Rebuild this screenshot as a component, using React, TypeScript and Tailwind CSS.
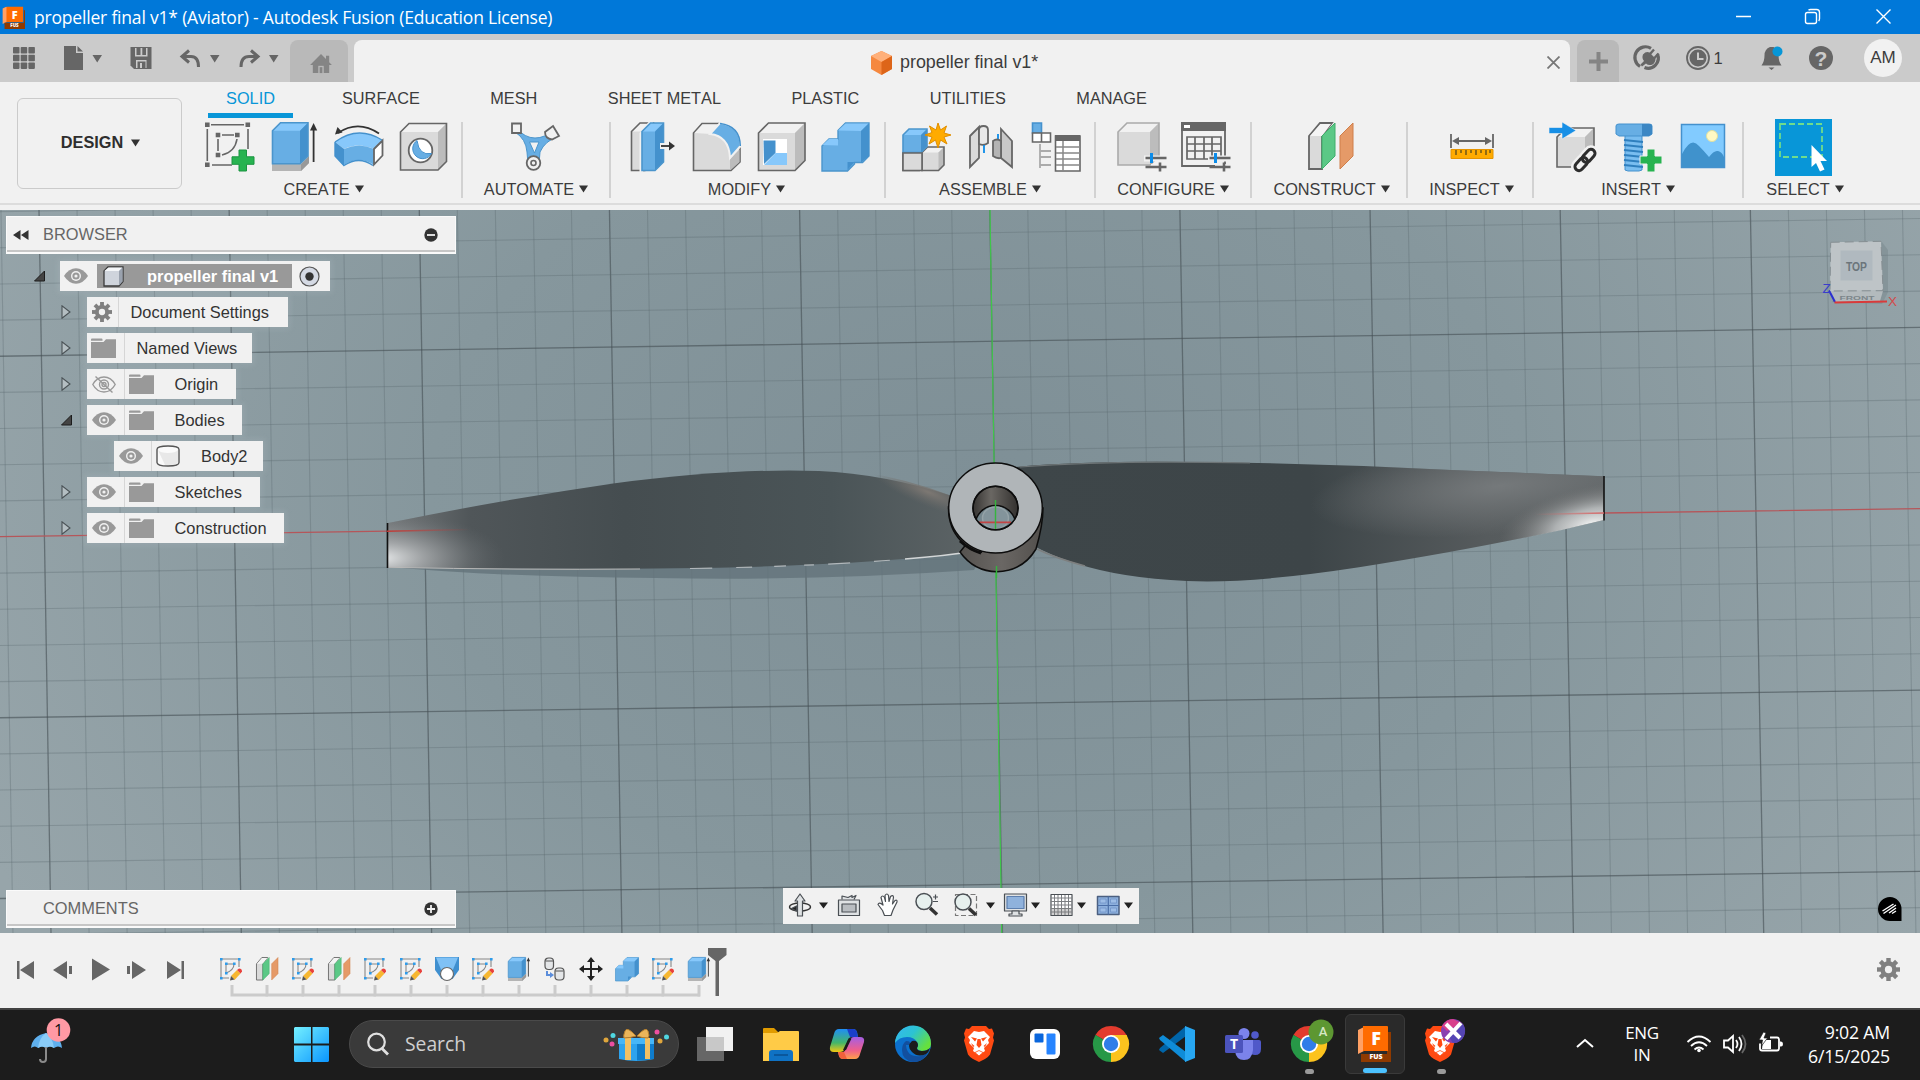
import React from "react";

type Children = { children?: React.ReactNode };

/* ---------- small shared pieces ---------- */

const Caret = ({ color = "#333" }: { color?: string }) => (
  <svg width="9" height="8" viewBox="0 0 9 8" className="shrink-0">
    <path d="M0 .5h9L4.5 7.5z" fill={color} />
  </svg>
);

const Icon = ({ children }: Children) => (
  <svg width="50" height="50" viewBox="0 0 50 50" className="shrink-0 overflow-visible">
    {children}
  </svg>
);

type BoxProps = { x: number; y: number; w: number; h: number; d: number; blue?: boolean; stroke?: string };

const Prism = ({ x, y, w, h, d, blue, stroke }: BoxProps) => {
  const c = blue ? ["#67aee4", "#87c8fb", "#4491cd", "#4b95cc"] : ["#dadada", "#f1f1f1", "#bcbcbc", "#666"];
  const s = stroke ?? c[3];
  return (
    <g>
      <path d={`M${x} ${y + d}l${d} ${-d}h${w - d}v${h - d}l${-d} ${d}h${d - w}z`} fill={c[0]} />
      <path d={`M${x} ${y + d}l${d} ${-d}h${w - d}l${-d} ${d}z`} fill={c[1]} />
      <path d={`M${x + w} ${y}v${h - d}l${-d} ${d}v${d - h}z`} fill={c[2]} />
      <path d={`M${x} ${y + d}l${d} ${-d}h${w - d}v${h - d}l${-d} ${d}h${d - w}z`} fill="none" stroke={s} strokeWidth="1.6" />
    </g>
  );
};

/* ---------- ribbon icons ---------- */

const SketchIcon = () => (
  <Icon>
    <path d="M6 2.7h33M2.3 7v32M43 7v20M7 43h20M17 13h12M13 17v12M32 17Q30 30 17 33" fill="none" stroke="#666" strokeWidth="1.6" />
    <path d="M0 .5h4.6v4.6H0zM40.5.5h4.6v4.6h-4.6zM0 40.5h4.6v4.6H0zM10.7 10.7h4.6v4.6h-4.6zM30 10.7h4.6v4.6H30zM10.7 30.7h4.6v4.6h-4.6z" fill="#666" />
    <path d="M34 28h7.5v6.8H49v7.5h-7.5V49H34v-6.7h-7v-7.5h7z" fill="#27b350" stroke="#1b9440" />
  </Icon>
);

const ExtrudeArt = () => (
  <g>
    <path d="M2 42h29l8-8v7l-8 8H2z" fill="#b4b4b4" />
    <path d="M31 42l8-8v7l-8 8z" fill="#999" />
    <Prism x={2.5} y={0.8} w={35.5} h={41} d={8} blue />
    <path d="M43.6 40V6" stroke="#333" strokeWidth="1.8" />
    <path d="M40 8.5h7.2L43.6 1z" fill="#333" />
  </g>
);

const RevolveIcon = () => (
  <Icon>
    <path d="M4 11Q24-2.500 45 11.500" fill="none" stroke="#333" strokeWidth="1.800" />
    <path d="M1 12.500L3.500 5l5 5.500z" fill="#333" />
    <path d="M1 20Q24 3 49 19L40 27Q24 20 10 27z" fill="#87c8fb" />
    <path d="M1 20l9 7v17L1 34z" fill="#4491cd" />
    <path d="M10 27q15-7 30 0v16q-15-10-30 0z" fill="#67aee4" />
    <path d="M40 27l8.500-8.500v15L40 42.500z" fill="#fff" stroke="#666" strokeWidth="1.800" />
    <path d="M1 20Q24 3 48 18M1 20v14l9 9.500q15-10 29 0" fill="none" stroke="#4491cd" strokeWidth="1.400" />
  </Icon>
);

const HoleIcon = () => (
  <Icon>
    <Prism x={1.500} y={1.500} w={46} h={46.500} d={8.500} />
    <circle cx="21.500" cy="28.500" r="11.800" fill="#fff" stroke="#666" strokeWidth="1.800" />
    <path d="M18 18.500a10 10 0 1 0 14.500 13Q20 34 18 18.500z" fill="#67aee4" stroke="#4491cd" />
  </Icon>
);

const AutomateIcon = () => (
  <Icon>
    <path d="M5 6Q14 16 24 16Q34 16 42 8l4 7Q34 19 29 30L28 42H17l-1-12Q15 17 4 10z" fill="#67aee4" stroke="#4b95cc" />
    <path d="M18.500 20h9.500l-4.500 11z" fill="#f1f1f1" stroke="#4b95cc" />
    <path d="M1 1.500h9v9.500H1z" fill="#f1f1f1" stroke="#666" strokeWidth="1.800" />
    <path d="M42 4l6 10-7 3.500q-7-1-7-7.500z" fill="#f1f1f1" stroke="#666" strokeWidth="1.800" />
    <circle cx="22.500" cy="41" r="6.800" fill="#f1f1f1" stroke="#666" strokeWidth="1.800" />
    <circle cx="22.500" cy="41" r="2.500" fill="none" stroke="#666" strokeWidth="1.600" />
  </Icon>
);

const PressPullIcon = () => (
  <Icon>
    <Prism x={3.500} y={1} w={22} h={47.500} d={8.500} />
    <path d="M11.500 11L20.500 0h5L15 11v39h-3.500z" fill="#f1f1f1" />
    <Prism x={14} y={1} w={21.500} h={47.500} d={8.500} blue />
    <path d="M32 24h14" stroke="#f1f1f1" strokeWidth="6" />
    <path d="M33 24h10" stroke="#333" strokeWidth="1.800" />
    <path d="M41 19.500v9l6-4.500z" fill="#333" />
  </Icon>
);

const FilletIcon = () => (
  <Icon>
    <path d="M1.500 11L10 1.500h19Q48 6 48 26v14l-9 8.500H1.500z" fill="#dadada" stroke="#666" strokeWidth="1.600" />
    <path d="M2.500 11L10.500 2.500H28l-9 9.500z" fill="#f1f1f1" />
    <path d="M38 37l9.500-9.500V40l-9 8h-.5z" fill="#bcbcbc" />
    <path d="M18 12l10-11Q49 4 48.500 24L38 36Q37 14 18 12z" fill="#67aee4" stroke="#f1f1f1" strokeWidth="2" />
    <path d="M28 1.500Q48 4 48.300 24" fill="none" stroke="#4491cd" strokeWidth="1.500" />
  </Icon>
);

const ShellIcon = () => (
  <Icon>
    <Prism x={1.500} y={1} w={46.500} h={47.500} d={10} />
    <path d="M6 17h24v26H6z" fill="#fff" />
    <path d="M6.500 18.500h12V31L7 42z" fill="#4491cd" />
    <path d="M18.500 31H30v12H7z" fill="#87c8fb" />
  </Icon>
);

const CombineArt = () => (
  <g>
    <path d="M17 8.500L24.500 1H48v33l-6.500 6.500h-8V42l-7 7H1V24l7-7h9z" fill="#67aee4" stroke="#4b95cc" strokeWidth="1.400" />
    <path d="M17 8.500L24.500 1.500H48l-8 7.500zM1.500 23L8 17h9v6.500z" fill="#87c8fb" />
    <path d="M40 9l8-8v33l-8 6.500zM26.500 48V40h7z" fill="#4491cd" />
  </g>
);

const NewComponentIcon = () => (
  <Icon>
    <Prism x={1} y={25} w={22} h={23.500} d={5.500} />
    <Prism x={20} y={25} w={22} h={23.500} d={5.500} />
    <Prism x={1} y={7} w={24} h={23.500} d={6} blue />
    <path d="M1 31h19v17.500H1z" fill="#dadada" stroke="#666" strokeWidth="1.600" />
    <path d="M36 1l2.500 7 6-4-2.500 7 7 2-7 2 3 7-6.500-4L36 26l-2.500-8-6.500 4 3-7-7-2 7-2.500-2.500-6.500 6.500 4z" fill="#ffab00" stroke="#e08e00" />
  </Icon>
);

const JointIcon = () => (
  <Icon>
    <path d="M3 14L12 5v31L3 45z" fill="#dadada" stroke="#666" strokeWidth="1.800" />
    <path d="M12 8q0-4 4.500-4T21 8v13q-4 3-9 1z" fill="#e8e8e8" stroke="#666" strokeWidth="1.800" />
    <path d="M17 23v8M31 12v11" stroke="#0c8ce9" strokeWidth="1.800" />
    <path d="M34 7l11 12v26L34 36z" fill="#c8c8c8" stroke="#666" strokeWidth="1.800" />
    <path d="M26 19q4-3 8 0v17q-4 1-8-2z" fill="#b4b4b4" stroke="#666" strokeWidth="1.800" />
  </Icon>
);

const BomIcon = () => (
  <Icon>
    <path d="M1.500 1h9v10h-9z" fill="#67aee4" stroke="#4491cd" strokeWidth="1.600" />
    <path d="M1.500 11h9v9h-9zM10.500 11h9v9h-9z" fill="#fff" stroke="#666" strokeWidth="1.600" />
    <path d="M9 22v24M9 29h11M9 35h11M9 43h11" stroke="#aaa" strokeWidth="1.800" />
    <path d="M24.500 14H49v35H24.500z" fill="#fff" stroke="#666" strokeWidth="1.600" />
    <path d="M24 13h25v6H24z" fill="#666" />
    <path d="M25 25h24M25 31h24M25 37h24M25 43h24M32 19v30" stroke="#888" strokeWidth="1.500" />
  </Icon>
);

const Sliders = () => (
  <g>
    <path d="M27 36.500h22M34 45h15" stroke="#f1f1f1" strokeWidth="6" />
    <path d="M28.500 36h21M28.500 45h21M43 40.500v9" stroke="#666" strokeWidth="2.600" />
    <path d="M34.500 31v10" stroke="#0c8ce9" strokeWidth="3" />
  </g>
);

const ConfigureIcon = () => (
  <Icon>
    <Prism x={1} y={1} w={41} h={42} d={9} stroke="#aaa" />
    <Sliders />
  </Icon>
);

const ConfigTableIcon = () => (
  <Icon>
    <path d="M1 1h43v43H1z" fill="#f1f1f1" stroke="#666" strokeWidth="1.800" />
    <path d="M0 0h45v9H0z" fill="#666" />
    <path d="M3 3h6v3H3z" fill="#fff" />
    <path d="M6 15h34v22H6zM6 22h34M6 29h34M14 15v22M23 15v22M31 15v22" fill="none" stroke="#666" strokeWidth="1.700" />
    <Sliders />
  </Icon>
);

const PlaneArt = () => (
  <g>
    <path d="M3 14L14 1h12L16 14v33H3z" fill="#dadada" stroke="#666" strokeWidth="1.800" />
    <path d="M4 14L14.500 2H25L16 14z" fill="#f4f4f4" />
    <path d="M16 14L29 1v33L16 47z" fill="#5bc886" stroke="#3fae6b" />
    <path d="M34 14L47 1v33L34 47z" fill="#e59a68" stroke="#cf7f4b" />
  </g>
);

const InspectIcon = () => (
  <Icon>
    <path d="M4 12v14M46 12v14" stroke="#666" strokeWidth="1.800" />
    <path d="M8 19h34" stroke="#666" strokeWidth="2" />
    <path d="M5 19l7-4v8zM45 19l-7-4v8z" fill="#666" />
    <path d="M4 27.500h42v9H4z" fill="#ffab00" stroke="#e59400" />
    <path d="M9 28v5M14 28v3M19 28v5M24 28v3M29 28v5M34 28v3M39 28v5M43 28v3" stroke="#5a4a1a" strokeWidth="1.300" />
  </Icon>
);

const InsertIcon = () => (
  <Icon>
    <Prism x={8} y={6} w={37} h={39} d={9} />
    <path d="M0 5.500h13V0l14 8.500L13 17v-5.500H0z" fill="#178fe6" stroke="#f1f1f1" strokeWidth=".6" />
    <g fill="none" stroke="#f1f1f1" strokeWidth="8" transform="rotate(-48 36 38)">
      <rect x="23" y="34" width="15" height="8" rx="4" />
      <rect x="34" y="34" width="15" height="8" rx="4" />
    </g>
    <g fill="none" stroke="#2d2d2d" strokeWidth="3" transform="rotate(-48 36 38)">
      <rect x="23" y="34" width="15" height="8" rx="4" />
      <rect x="34" y="34" width="15" height="8" rx="4" />
    </g>
  </Icon>
);

const FastenerIcon = () => (
  <Icon>
    <path d="M12 12h17v36l-3 1H15l-3-1z" fill="#79bdf0" stroke="#4491cd" />
    <path d="M11 18l19 2M11 23l19 2M11 28l19 2M11 33l19 2M11 38l19 2M11 43l19 2" stroke="#2f7fbe" strokeWidth="2" />
    <path d="M3 4q0-2 3-2h30q3 0 3 2v8l-3 2H6l-3-2z" fill="#67aee4" stroke="#4491cd" />
    <path d="M29 2h8q2 0 2 2v8l-3 2h-7z" fill="#3c87c4" />
    <path d="M34 27h8v7h7v8h-7v8h-8v-8h-7v-8h7z" fill="#27b350" stroke="#f1f1f1" />
  </Icon>
);

const PictureIcon = () => (
  <Icon>
    <path d="M3.500 2.500h43v43h-43z" fill="#82cbff" stroke="#4491cd" strokeWidth="1.500" />
    <circle cx="34" cy="14" r="5.500" fill="#fff9c4" stroke="#e0e0a0" />
    <path d="M4 32Q13 14 21 24q5 5 10 11 5-7 9-6 4 1 6 6v10H4z" fill="#4092cc" />
  </Icon>
);

const SelectIcon = () => (
  <div className="-my-1 h-[57px] w-[57px] shrink-0 bg-[#0896d8]">
    <svg width="57" height="57" viewBox="0 0 57 57">
      <path d="M5 5h42v33H5z" fill="none" stroke="#6fdc8c" strokeWidth="1.800" strokeDasharray="6 3" />
      <path d="M36.500 26v22l4.500-4 4 8.500 4.500-2-4-8.500h6.500z" fill="#fff" />
    </svg>
  </div>
);

/* ---------- title and quick access bars ---------- */

const FusionLogo = ({ className }: { className: string }) => (
  <svg viewBox="0 0 36 36" className={className}>
    <path d="M4 27h30V6l2 1v29H6z" fill="#8f3a00" />
    <path d="M3 3l5-2h25v24H8l-5 2z" fill="#ff6b00" />
    <path d="M1 4l6-3v24l-6 3z" fill="#ffa064" />
    <path d="M4 26h30v10H4z" fill="#8f3a00" />
    <text x="20" y="20" textAnchor="middle" fontFamily="Open Sans, sans-serif" fontWeight="800" fontSize="17" fill="#fff">F</text>
    <text x="19.500" y="33.500" textAnchor="middle" fontFamily="Open Sans, sans-serif" fontWeight="800" fontSize="7" fill="#fff">FUS</text>
  </svg>
);

const TitleBar = () => (
  <header className="flex h-[34px] shrink-0 items-center bg-[#0078d9] pl-[2px] text-white">
    <FusionLogo className="h-[25px] w-[23px]" />
    <span className="ml-[9px] whitespace-nowrap font-['Open_Sans',sans-serif] text-[17.500px] tracking-[-0.190px]">
      propeller final v1* (Aviator) - Autodesk Fusion (Education License)
    </span>
    <svg width="186" height="34" viewBox="1734 0 186 34" className="ml-auto" fill="none" stroke="#fff" strokeWidth="1.400">
      <path d="M1736 16.500h15M1876.500 9.500l14 14M1890.500 9.500l-14 14" />
      <rect x="1805.500" y="12.500" width="11" height="11" rx="2" />
      <path d="M1808.500 10q1-.5 2-.5h6q3 0 3 3v6q0 1.500-.8 2.500" />
    </svg>
  </header>
);

const QuickBar = () => (
  <div className="flex h-12 shrink-0 items-end bg-[#cbcbcb] font-['Liberation_Sans',sans-serif]">
    <svg width="289.500" height="48" viewBox="0 34 289.500 48" className="shrink-0" fill="#666">
      {[0, 1, 2].map((r) =>
        [0, 1, 2].map((c) => <rect key={`${r}${c}`} x={13 + c * 7.700} y={47 + r * 7.700} width="6.500" height="6.500" rx=".8" />),
      )}
      <path d="M64 46h12v7h7v17H64zM77.500 46l5.500 5.500h-5.500z" />
      <path d="M92.500 55h9.500l-4.800 7.500zM210 55h9.500l-4.800 7.500zM269 55h9.500l-4.800 7.500z" />
      <path d="M131 47h20.500v22H134l-3.500-3.500V47z" />
      <path d="M135 48h12.500v8.500H135zM136 60h10.500v8H136z" fill="#cbcbcb" />
      <path d="M136.500 47h9.500v8h-9.500zM137.500 61.500h8V68h-8z" />
      <path d="M140 63h2v5h-2zM140.500 48h1.800v7h-1.800z" fill="#cbcbcb" />
      <path d="M189 50.500l-7 6 7 6M183 56.500h8q7.500 0 7.500 10.500M251 50.500l7 6-7 6M257 56.500h-8q-8 0-8 10.500" fill="none" stroke="#666" strokeWidth="3" />
    </svg>
    <div className="flex h-[42px] w-[58.500px] shrink-0 items-center justify-center rounded-t-lg bg-[#b9b9b9] pl-[4px]">
      <svg width="22" height="20" viewBox="0 0 24 22" className="mt-[5px]" fill="#858585">
        <path d="M12 0L0 12h3v9h18v-9h3l-3-3V2h-3.500v3.500z" />
        <path d="M9 13h6v8H9z" fill="#b9b9b9" />
        <path d="M10.500 14.500h3V21h-3z" />
      </svg>
    </div>
    <div className="ml-[6px] flex h-[42px] w-[1216px] shrink-0 items-center rounded-t-lg bg-[#f1f1f1] pl-[516px] pt-[3px] text-[#3c3c3c]">
      <svg width="23" height="24" viewBox="0 0 23 24">
        <path d="M11.500 0L22 5v13l-10.500 6L1 18V5z" fill="#f5883f" />
        <path d="M11.500 0L22 5l-10.500 6L1 5z" fill="#ffb07a" />
        <path d="M11.500 11L22 5v13l-10.500 6z" fill="#dd6519" />
      </svg>
      <span className="ml-[7px] whitespace-nowrap text-[17.900px]">propeller final v1*</span>
      <svg width="13" height="13" viewBox="0 0 13 13" className="ml-auto mr-[10px]" stroke="#777" strokeWidth="1.800">
        <path d="M.5.500l12 12M12.500.500l-12 12" />
      </svg>
    </div>
    <div className="ml-[7px] flex h-[42px] w-[42px] shrink-0 items-center justify-center rounded-t-lg bg-[#b9b9b9]">
      <svg width="19" height="19" viewBox="0 0 19 19" stroke="#858585" strokeWidth="4">
        <path d="M9.500 0v19M0 9.500h19" />
      </svg>
    </div>
    <svg width="211" height="48" viewBox="1619 34 211 48" className="shrink-0 overflow-visible" fill="#666">
      <path d="M1640 66.500A10.200 10.200 0 0 1 1651 48.300M1657.500 54A10.200 10.200 0 0 1 1644.500 67.500" fill="none" stroke="#666" strokeWidth="3.200" />
      <path d="M1643 54.500q3-3.500 6.500-2l6 6q0 4-3 6-4 1.500-6.500-1l-4 3-1.500-2 3.500-3.500q-2.500-3-1-6.500z" />
      <path d="M1650 54l4-4.500M1654.500 58l4-4.500" stroke="#666" strokeWidth="2.400" />
      <circle cx="1698" cy="58" r="11" fill="none" stroke="#666" strokeWidth="1.800" />
      <circle cx="1698" cy="58" r="8.500" />
      <path d="M1698 52.500v6.500h5.500" fill="none" stroke="#cbcbcb" strokeWidth="2" />
      <text x="1713.500" y="64" fontSize="16.500" fill="#3c3c3c">1</text>
      <path d="M1770 47h3.500q5 2 5 8.500 0 6 3 10h-20q3-4 3-10 0-6.500 5.500-8.500zM1768.500 67.500h6l-3 2.500z" />
      <circle cx="1777.500" cy="51.500" r="5" fill="#0696d7" />
      <circle cx="1821" cy="58" r="12" />
      <text x="1821" y="65.500" textAnchor="middle" fontSize="21" fontWeight="bold" fill="#cbcbcb">?</text>
    </svg>
    <div className="mb-[5px] ml-[34px] flex h-[38px] w-[38px] shrink-0 items-center justify-center rounded-full bg-[#f1f1f1] text-[17px] text-[#3c3c3c]">
      AM
    </div>
  </div>
);

/* ---------- ribbon ---------- */

type GroupProps = Children & { label: string; width: string; last?: boolean; nudge?: string; labelNudge?: string };

const Group = ({ label, width, last, nudge = "", labelNudge = "", children }: GroupProps) => (
  <section className={`flex h-[76px] shrink-0 flex-col items-center ${last ? "" : "border-r-2 border-[#d2d2d2]"} ${width}`}>
    <div className={`flex h-[50px] shrink-0 items-center gap-[14.500px] ${nudge}`}>{children}</div>
    <div className={`flex h-[34px] shrink-0 items-center gap-[5px] text-[16.300px] ${labelNudge}`}>
      {label}
      <Caret />
    </div>
  </section>
);

const Ribbon = () => (
  <div className="flex h-32 shrink-0 bg-[#f1f1f1] font-['Liberation_Sans',sans-serif] text-[#3c3c3c] [font-kerning:none]">
    <div className="w-[184px] shrink-0 pl-[17px] pt-4">
      <button className="flex h-[91px] w-[165px] items-center justify-center gap-2 rounded-md border-[1.500px] border-[#cbcbcb] pb-[2px] pl-[2px] text-[16.300px] font-bold text-[#2e2e2e]">
        DESIGN <Caret />
      </button>
    </div>
    <div className="flex min-w-0 grow flex-col">
      <nav className="flex h-9 items-start pl-6 text-[16.300px]">
        <span className="flex h-[36px] w-[85px] items-center justify-center border-b-[5px] border-[#0896d8] pb-0 pt-[1px] text-[#0896d8]">SOLID</span>
        <div className="flex h-8 items-center gap-[70.500px] whitespace-nowrap pl-[49px]">
          <span>SURFACE</span>
          <span>MESH</span>
          <span>SHEET METAL</span>
          <span>PLASTIC</span>
          <span>UTILITIES</span>
          <span>MANAGE</span>
        </div>
      </nav>
      <div className="mt-1 flex h-[83px] border-b-2 border-[#dcdcdc] -ml-[184px] pl-[184px]">
        <Group label="CREATE" width="w-[279px]" nudge="pl-[9px]" labelNudge="pl-[2px]">
          <SketchIcon />
          <Icon><ExtrudeArt /></Icon>
          <RevolveIcon />
          <HoleIcon />
        </Group>
        <Group label="AUTOMATE" width="w-[148px]"><AutomateIcon /></Group>
        <Group label="MODIFY" width="w-[275px]" nudge="pl-[4px]" labelNudge="pr-[2px]">
          <PressPullIcon />
          <FilletIcon />
          <ShellIcon />
          <Icon><CombineArt /></Icon>
        </Group>
        <Group label="ASSEMBLE" width="w-[210px]" nudge="pl-[3px]">
          <NewComponentIcon />
          <JointIcon />
          <BomIcon />
        </Group>
        <Group label="CONFIGURE" width="w-[156px]" nudge="pl-[2px]">
          <ConfigureIcon />
          <ConfigTableIcon />
        </Group>
        <Group label="CONSTRUCT" width="w-[156px]" nudge="pl-[4px]" labelNudge="pl-[5px]"><Icon><PlaneArt /></Icon></Group>
        <Group label="INSPECT" width="w-[126px]" nudge="pl-[3px]" labelNudge="pl-[3px]"><InspectIcon /></Group>
        <Group label="INSERT" width="w-[210px]">
          <InsertIcon />
          <FastenerIcon />
          <PictureIcon />
        </Group>
        <Group label="SELECT" width="w-[122px]" nudge="pr-[4px]" last><SelectIcon /></Group>
      </div>
    </div>
  </div>
);

/* ---------- 3D canvas ---------- */

const range = (n: number) => Array.from({ length: n }, (_, i) => i);

const Scene = () => (
  <svg width="1920" height="723" viewBox="0 210 1920 723" className="block">
    <defs>
      <radialGradient id="sky" gradientUnits="userSpaceOnUse" cx="980" cy="500" r="1100" gradientTransform="translate(0 130) scale(1 .74)">
        <stop offset="0" stopColor="#7e8f96" />
        <stop offset=".5" stopColor="#86979d" />
        <stop offset="1" stopColor="#97a5aa" />
      </radialGradient>
      <linearGradient id="leftBlade" x1="0" x2="1" y1="0" y2="0">
        <stop offset="0" stopColor="#75797b" />
        <stop offset=".14" stopColor="#505659" />
        <stop offset=".4" stopColor="#454d50" />
        <stop offset=".75" stopColor="#4a5457" />
        <stop offset="1" stopColor="#5d6466" />
      </linearGradient>
      <radialGradient id="leftTip" gradientUnits="userSpaceOnUse" cx="0" cy="0" r="1" gradientTransform="translate(380 558) scale(125 46)">
        <stop offset="0" stopColor="#e9ebec" />
        <stop offset=".35" stopColor="#b0b3b5" stopOpacity=".75" />
        <stop offset="1" stopColor="#6b7073" stopOpacity="0" />
      </radialGradient>
      <radialGradient id="leftRoot" gradientUnits="userSpaceOnUse" cx="0" cy="0" r="1" gradientTransform="translate(928 492) rotate(22) scale(60 14)">
        <stop offset="0" stopColor="#7d7873" />
        <stop offset="1" stopColor="#6b6a68" stopOpacity="0" />
      </radialGradient>
      <linearGradient id="rightBlade" x1="0" x2="1" y1="0" y2="0">
        <stop offset="0" stopColor="#3e4649" />
        <stop offset=".5" stopColor="#3d4548" />
        <stop offset=".8" stopColor="#565b5d" />
        <stop offset="1" stopColor="#5b6062" />
      </linearGradient>
      <radialGradient id="rightSheen" gradientUnits="userSpaceOnUse" cx="0" cy="0" r="1" gradientTransform="translate(1500 486) rotate(-6) scale(190 48)">
        <stop offset="0" stopColor="#75797b" />
        <stop offset="1" stopColor="#75797b" stopOpacity="0" />
      </radialGradient>
      <radialGradient id="rightTip" gradientUnits="userSpaceOnUse" cx="0" cy="0" r="1" gradientTransform="translate(1592 524) rotate(-12) scale(95 38)">
        <stop offset="0" stopColor="#f2f3f3" />
        <stop offset=".4" stopColor="#c3c6c7" stopOpacity=".8" />
        <stop offset="1" stopColor="#777" stopOpacity="0" />
      </radialGradient>
      <linearGradient id="fadeLeft" gradientUnits="userSpaceOnUse" x1="387" x2="470" y1="0" y2="0">
        <stop offset="0" stopColor="#c23a36" />
        <stop offset="1" stopColor="#c23a36" stopOpacity="0" />
      </linearGradient>
      <linearGradient id="fadeRight" gradientUnits="userSpaceOnUse" x1="1604" x2="1535" y1="0" y2="0">
        <stop offset="0" stopColor="#d46666" />
        <stop offset="1" stopColor="#d46666" stopOpacity="0" />
      </linearGradient>
      <linearGradient id="bore" x1="0" x2="1" y1="0" y2="0">
        <stop offset="0" stopColor="#363432" />
        <stop offset=".4" stopColor="#6a6763" />
        <stop offset="1" stopColor="#33312f" />
      </linearGradient>
      <linearGradient id="hubSide" x1="0" x2="1" y1="0" y2="0">
        <stop offset="0" stopColor="#55524f" />
        <stop offset=".5" stopColor="#6a6764" />
        <stop offset="1" stopColor="#524f4c" />
      </linearGradient>
      <clipPath id="boreClip">
        <ellipse cx="995.500" cy="508" rx="22.500" ry="21.700" />
      </clipPath>
    </defs>
    <rect y="210" width="1920" height="723" fill="url(#sky)" />

    {range(56).map((i) => {
      const k = i - 4;
      const major = (k + 50) % 5 === 0;
      return (
        <line key={i} x1={39 + 38.030 * k} y1="210" x2={51 + 38.060 * k} y2="933" stroke={major ? "#454f53" : "#5c696e"} strokeOpacity={major ? 0.6 : 0.34} strokeWidth={major ? 1.300 : 1.100} />
      );
    })}
    {range(23).map((i) => {
      const k = i - 1;
      const major = k % 5 === 0 && k >= 0;
      if (k === 10) return null;
      return (
        <line key={i} x1="0" y1={175.500 + 36.150 * k} x2="1920" y2={146 + 36.270 * k} stroke={major ? "#454f53" : "#5c696e"} strokeOpacity={major ? 0.6 : 0.34} strokeWidth={major ? 1.300 : 1.100} />
      );
    })}
    <path d="M0 536.700L388 531.200M1604 513L1920 508.700" stroke="#b5565a" strokeWidth="1.300" />
    <path d="M990 210L1001.700 933" stroke="#3fc64a" strokeWidth="1.200" />

    <path d="M390 567Q500 577 656 578Q820 581 974 570L985 550L700 566z" fill="#63737a" fillOpacity=".8" />

    <g>
      <path d="M387 523.300Q500 500 615 483.300Q730 468 819 471Q885 474 952 496L980 551Q900 562 758 566.700Q620 570.500 388 567.300z" fill="url(#leftBlade)" />
      <path d="M387 523.300Q500 500 615 483.300Q730 468 819 471Q885 474 952 496L980 551Q900 562 758 566.700Q620 570.500 388 567.300z" fill="url(#leftTip)" />
      <path d="M860 472Q905 478 952 496L960 520L860 515z" fill="url(#leftRoot)" />
      <path d="M388 567.300Q520 570 640 569" fill="none" stroke="#b9b8b7" strokeWidth="1" />
      <path d="M690 568.500Q830 566 910 558.500" fill="none" stroke="#c4c8ca" strokeOpacity=".8" strokeWidth="1.200" strokeDasharray="22 24 16 22 12 18 10 14" />
      <path d="M905 559Q945 556 979 550.500" fill="none" stroke="#d3d6d7" strokeWidth="1.600" />
      <path d="M387.500 523v45" stroke="#111" strokeWidth="1.600" />
      <path d="M387 531.200L470 529.500" stroke="url(#fadeLeft)" strokeWidth="1.500" />
    </g>

    <g>
      <path d="M1015 467Q1085 461 1185 462Q1320 463 1451 470L1603.500 476.300L1604 520Q1500 545 1359 567.300Q1250 584 1187 581Q1120 578 1075 563Q1050 555 1034 546z" fill="url(#rightBlade)" />
      <path d="M1300 464Q1380 466 1451 470L1603.500 476.300L1604 520Q1500 545 1310 574z" fill="url(#rightSheen)" />
      <path d="M1480 471L1603.500 476.300L1604 520Q1540 536 1480 546z" fill="url(#rightTip)" />
      <path d="M1020 467Q1110 460 1250 463" fill="none" stroke="#6d7476" strokeWidth="1.200" />
      <path d="M1037 549Q1055 558 1085 566" fill="none" stroke="#7d7f7f" strokeWidth="1.600" />
      <path d="M1604 476v44.500" stroke="#111" strokeWidth="1.600" />
      <path d="M1530 514.500L1604 513" stroke="url(#fadeRight)" strokeWidth="1.500" />
    </g>

    <g stroke="#0d0d0d" strokeWidth="1.500">
      <path d="M960 552Q974 571.500 997 571.700Q1023 571 1036 549Q1043 525 1043 508L995 508z" fill="url(#hubSide)" />
      <path d="M948.500 508Q948.500 528 961 541Q970 551 981 552.500L985 548z" fill="#4a4846" />
      <path d="M960 541Q970 550 981 553" fill="none" strokeWidth="3" />
      <ellipse cx="995.500" cy="508" rx="46.800" ry="45" fill="#b0b5b8" />
      <ellipse cx="995.500" cy="508" rx="22.500" ry="21.700" fill="url(#bore)" />
      <g clipPath="url(#boreClip)">
        <ellipse cx="995.500" cy="526" rx="20.500" ry="20.500" fill="#74868d" />
        <ellipse cx="995.500" cy="518" rx="13" ry="11" fill="#83949b" stroke="#95a3a8" />
        <path d="M979 522.300h32" stroke="#c24444" strokeWidth="1.800" />
      </g>
      <ellipse cx="995.500" cy="508" rx="22.500" ry="21.700" fill="none" />
      <path d="M995.500 500v29M996.500 566v12" stroke="#35b53e" strokeWidth="1.400" />
    </g>

    <g>
      <path d="M1832 302L1882 304L1888 292V250l-6-8z" fill="#6d7c82" fillOpacity=".35" />
      <path d="M1830 291h53l-3 10-45 1z" fill="#b3babd" />
      <path d="M1830.700 242.300L1881 241.300L1883 290.700L1830 291z" fill="#bec4c7" stroke="#858e92" strokeWidth="1" strokeDasharray="9 5" />
      <path d="M1840.500 250.500h32v30h-32z" fill="#b0b9bf" />
      <text x="1856.500" y="270.500" textAnchor="middle" textLength="21" lengthAdjust="spacingAndGlyphs" fontFamily="Liberation Sans, sans-serif" fontWeight="bold" fontSize="13.500" fill="#6b757b">TOP</text>
      <text x="1857" y="300" textAnchor="middle" textLength="35" lengthAdjust="spacingAndGlyphs" fontFamily="Liberation Sans, sans-serif" fontWeight="bold" fontSize="6" fill="#7c868b">FRONT</text>
      <path d="M1829 290.500L1835 302" stroke="#2a2fd0" strokeWidth="2" />
      <path d="M1834.500 302.500L1887 301.500" stroke="#d93a3a" strokeWidth="2" />
      <text x="1822.500" y="293" fontFamily="Liberation Sans, sans-serif" fontSize="13.500" fill="#3a3ecb">Z</text>
      <text x="1888" y="306" fontFamily="Liberation Sans, sans-serif" fontSize="13.500" fill="#d14a4a">X</text>
    </g>
  </svg>
);

/* ---------- browser tree ---------- */

const Eye = () => (
  <svg width="24" height="16" viewBox="0 0 24 16" className="shrink-0">
    <path d="M0 8Q5 .3 12 .3T24 8q-5 7.700-12 7.700T0 8z" fill="#999" />
    <circle cx="12" cy="8" r="5" fill="#f1f1f1" />
    <circle cx="12" cy="8" r="3.600" fill="#999" />
    <circle cx="12" cy="8" r="1.600" fill="#f1f1f1" />
  </svg>
);

const EyeOff = () => (
  <svg width="24" height="17" viewBox="0 0 24 17" className="shrink-0" fill="none" stroke="#999" strokeWidth="1.400">
    <path d="M.8 8.500Q5 1 12 1t11.200 7.500Q19 16 12 16T.8 8.500zM3.500.500l17 16" />
    <circle cx="12" cy="8.500" r="4.500" />
    <circle cx="12" cy="8.500" r="2" />
  </svg>
);

const Folder = () => (
  <svg width="25" height="20" viewBox="0 0 25 20" className="shrink-0" fill="#999">
    <path d="M0 1.500Q0 .5 1 .5h9.500q1 0 1 1v1.200H0zM0 4h12.500L15 1.200h10V20H0z" />
  </svg>
);

const Gear = ({ size, color }: { size: number; color: string }) => (
  <svg width={size} height={size} viewBox="0 0 24 24" className="shrink-0">
    <g fill={color}>
      {[0, 45, 90, 135].map((a) => (
        <rect key={a} x="9.700" y="0" width="4.600" height="24" transform={`rotate(${a} 12 12)`} />
      ))}
      <circle cx="12" cy="12" r="8.500" />
    </g>
    <circle cx="12" cy="12" r="3.800" fill="#f1f1f1" />
  </svg>
);

const Expander = ({ open }: { open?: boolean }) => (
  <svg width="11" height="14" viewBox="0 0 11 14" className="shrink-0">
    {open ? (
      <path d="M10.500 2v10H.5z" fill="#444" stroke="#1c1c1c" />
    ) : (
      <path d="M1 .800v12.500L9 7z" fill="#b4bec2" stroke="#4a5256" strokeWidth="1.100" />
    )}
  </svg>
);

const Cell = ({ children, width }: Children & { width: string }) => (
  <div className={`flex h-full shrink-0 items-center justify-center border-r border-[#d6d6d6] ${width}`}>{children}</div>
);

const Row = ({ indent, width, arrow, children }: Children & { indent: string; width: string; arrow?: "open" | "closed" }) => (
  <div className={`flex h-[30px] items-center ${indent}`}>
    <div className="w-[26px] shrink-0">{arrow && <Expander open={arrow === "open"} />}</div>
    <div className={`flex h-full shrink-0 items-center bg-[#f1f1f1] shadow-[0_0_6px_2px_rgba(200,210,214,0.18)] ${width}`}>{children}</div>
  </div>
);

const FolderRow = ({ label, width, arrow, hidden }: { label: string; width: string; arrow: "open" | "closed"; hidden?: boolean }) => (
  <Row indent="pl-[61px]" width={width} arrow={arrow}>
    <Cell width="w-[37.500px] pr-[3px]">{hidden ? <EyeOff /> : <Eye />}</Cell>
    <div className="pl-[4.500px]"><Folder /></div>
    <span className="pl-[20.500px]">{label}</span>
  </Row>
);

const PanelHeader = ({ label, minus }: { label: string; minus?: boolean }) => (
  <div className="flex h-[38px] w-[450px] items-center border border-b-2 border-[#fafafa] bg-[#f1f1f1] font-['Liberation_Sans',sans-serif] text-[16.400px] text-[#666] shadow-[inset_0_-2px_0_#c6c6c6]">
    <div className="w-[36px] shrink-0 pl-[6px]">
      {minus && (
        <svg width="16" height="10" viewBox="0 0 16 10" fill="#333">
          <path d="M0 5L7.500 0v10zM8 5l7.500-5v10z" />
        </svg>
      )}
    </div>
    <span>{label}</span>
    <svg width="14" height="14" viewBox="0 0 14 14" className="ml-auto mr-[17px]">
      <circle cx="7" cy="7" r="6.700" fill="#333" />
      <path d={minus ? "M3 7h8" : "M3 7h8M7 3v8"} stroke="#f1f1f1" strokeWidth="1.800" />
    </svg>
  </div>
);

const Browser = () => (
  <aside className="absolute left-0 top-[6px] w-[460px] font-['Liberation_Sans',sans-serif] text-[16.400px] text-[#333]">
    <div className="pl-[6px]"><PanelHeader label="BROWSER" minus /></div>
    <div className="mt-[7px] flex flex-col gap-[6px] whitespace-nowrap">
      <Row indent="pl-[34px]" width="w-[270px]" arrow="open">
        <div className="flex w-[37px] items-center justify-center pr-[5px]"><Eye /></div>
        <div className="flex h-6 w-[195px] items-center bg-[#999] pl-[6px] font-bold text-white">
          <svg width="21" height="21" viewBox="0 0 21 21">
            <path d="M1 5l4-4h15v14.500L16 20H1z" fill="#cfd4dc" stroke="#3a3a3a" strokeWidth="1.300" />
            <path d="M1.500 5l4-3.500h14L16 5z" fill="#f4f6f8" />
            <path d="M16 5l3.500-3.500v14L16 19.500z" fill="#9aa2ae" />
          </svg>
          <span className="pl-[23px]">propeller final v1</span>
        </div>
        <svg width="21" height="21" viewBox="0 0 21 21" className="ml-[6.500px]">
          <circle cx="10.500" cy="10.500" r="9.500" fill="#d5dae4" stroke="#555" strokeWidth="1.200" />
          <circle cx="10.500" cy="10.500" r="4.200" fill="#333" />
        </svg>
      </Row>
      <Row indent="pl-[61px]" width="w-[201px]" arrow="closed">
        <Cell width="w-[31.500px] pr-px"><Gear size={20} color="#808080" /></Cell>
        <span className="pl-3">Document Settings</span>
      </Row>
      <Row indent="pl-[61px]" width="w-[165px]" arrow="closed">
        <Cell width="w-[37.500px] pr-[3px]"><Folder /></Cell>
        <span className="pl-3">Named Views</span>
      </Row>
      <FolderRow label="Origin" width="w-[148.500px]" arrow="closed" hidden />
      <FolderRow label="Bodies" width="w-[154.500px]" arrow="open" />
      <Row indent="pl-[88px]" width="w-[149px]">
        <Cell width="w-[37.500px] pr-[3px]"><Eye /></Cell>
        <svg width="24" height="22" viewBox="0 0 24 22" className="ml-[4.500px]">
          <path d="M1 4.500q0-3.500 11-3.500t11 3.500v13q0 3.500-11 3.500T1 17.500z" fill="#fafafa" stroke="#555" strokeWidth="1.400" />
          <path d="M2 5q2 3 10 3t10-3v12q0 3-10 3h-3z" fill="#dcdcdc" fillOpacity=".6" />
        </svg>
        <span className="pl-[21px]">Body2</span>
      </Row>
      <FolderRow label="Sketches" width="w-[172.500px]" arrow="closed" />
      <FolderRow label="Construction" width="w-[197px]" arrow="closed" />
    </div>
  </aside>
);

/* ---------- navigation bar ---------- */

const NavBar = () => (
  <div className="absolute left-[783px] top-[678px] h-9 w-[356px] bg-[#f1f1f1]">
    <svg width="356" height="36" viewBox="783 888 356 36">
      <g fill="#dfe2e4" stroke="#4a4f54" strokeWidth="1.200" strokeLinejoin="round">
        <ellipse cx="800" cy="907" rx="10.500" ry="4" fill="none" stroke="#333" strokeWidth="1.400" />
        <path d="M797.500 916v-15h-2.500l5-7 5 7h-2.500v15z" />
        <path d="M791.500 908.500l5-2.500v5z" fill="#222" />
        <path d="M842 899.500v-3.500l6 1.500 4-2v2l4-2-2 4" />
        <path d="M838.500 900h21v15.500h-21z" />
        <path d="M842 904h14v8h-14z" fill="#b9bdc1" />
        <path d="M884.500 915.500l-2-5-4.500-6q1-3 5 .500l-2-7.500q1.500-3 3.500 0l1 4-.500-6q2-3 3.500 0l.500 6 1.500-5q2.500-2 3 .500l-1 7 2.500-3.500q2.500-1 2 1.500l-4 8-2 5.500z" fill="#fff" />
        <circle cx="924" cy="901.500" r="8" fill="#e6f0ee" strokeWidth="1.500" />
        <path d="M930 908l7 6.500" stroke="#333" strokeWidth="3.500" />
        <path d="M933 897h5M935.500 894.500v5M933 901.500h5" fill="none" />
        <path d="M955.500 894.500h21v21h-21z" fill="none" stroke="#777" strokeDasharray="5 2.500" />
        <circle cx="963" cy="902" r="8" fill="#e6f0ee" strokeWidth="1.500" />
        <path d="M969 908.500l7 6.500" stroke="#333" strokeWidth="3.500" />
        <path d="M1004.500 894h22v17h-22z" />
        <path d="M1007 896.500h17v12h-17z" fill="#8fb2dc" stroke="#5d7fae" />
        <path d="M1012 911h7v3h3v2h-13v-2h3z" />
        <path d="M1051 894.500h21v21h-21z" fill="#fff" />
        <path d="M1097.500 896.500h21.500v18h-21.500z" fill="#8db0dd" stroke="#4b5f80" strokeWidth="1.500" />
        <path d="M1108.300 896.500v18M1097.500 905.500h21.500" stroke="#4b6fa8" strokeWidth="1.200" />
        <path d="M1100 899h6v4h-6zM1110.500 899h6v4h-6zM1100 908h6v4h-6zM1110.500 908h6v4h-6z" fill="#9dbde6" stroke="#6f93c8" strokeWidth=".8" />
      </g>
      <path d="M1054.500 895v20M1058 895v20M1061.500 895v20M1065 895v20M1068.500 895v20M1051 898h21M1051 901.500h21M1051 905h21M1051 908.500h21M1051 912h21" stroke="#7c7f82" strokeWidth="1" />
      <path d="M1052 908h19v7h-19z" fill="#777" fillOpacity=".35" />
      <path d="M819 902.500h9l-4.500 6zM986 902.500h9l-4.500 6zM1031 902.500h9l-4.500 6zM1077 902.500h9l-4.500 6zM1124 902.500h9l-4.500 6z" fill="#222" />
    </svg>
  </div>
);

/* ---------- timeline ---------- */

const TimelineSketch = () => (
  <g>
    <path d="M3 2h17M2 3v18M20 3v7M3 21h7M7 7h8M7 7v9M15 7q0 6-8 9" fill="none" stroke="#888" strokeWidth="1.100" />
    <path d="M1 1h2.600v2.600H1zM19 1h2.600v2.600H19zM1 20h2.600v2.600H1zM6 5.500h2.600v2.600H6zM14 5.500h2.600v2.600H14zM6 15h2.600v2.600H6z" fill="#2e9bea" />
    <path d="M12 19l6-6 3.500 3.500-6 6.500z" fill="#f7b731" />
    <path d="M18 13l2-1.500q3 0 3 3l-1.500 2z" fill="#e8413c" />
    <path d="M12 19l3.500 3.500-4.500 1z" fill="#555" />
  </g>
);

const timeline = ["sketch", "plane", "sketch", "plane", "sketch", "sketch", "loft", "sketch", "extrude", "copy", "move", "combine", "sketch", "extrude"];

const TimelineArt = ({ kind }: { kind: string }) => {
  switch (kind) {
    case "sketch":
      return <TimelineSketch />;
    case "plane":
      return <g transform="scale(.49)"><PlaneArt /></g>;
    case "extrude":
      return <g transform="scale(.49)"><ExtrudeArt /></g>;
    case "combine":
      return <g transform="scale(.49)"><CombineArt /></g>;
    case "loft":
      return (
        <g>
          <path d="M0 0h24v13l-6.500 9h-11L0 13z" fill="#3f8fcf" />
          <path d="M1 .5h22L17 15H7z" fill="#7fc1f5" />
          <circle cx="12" cy="17" r="6.500" fill="#fff" stroke="#666" strokeWidth="1.100" />
        </g>
      );
    case "copy":
      return (
        <g fill="#e4e6e8" stroke="#555" strokeWidth="1.200">
          <rect x="2" y="1" width="8.500" height="11.500" rx="3.500" />
          <rect x="12" y="11" width="9" height="12" rx="3.500" />
          <path d="M2.500 4h7.500M12.500 14h8" />
          <path d="M4 14v4h4" fill="none" stroke="#5b8ddb" strokeWidth="2" />
          <path d="M7 15l4 3-4 3z" fill="#5b8ddb" stroke="none" />
        </g>
      );
    default:
      return (
        <g fill="#222">
          <path d="M12 2v20M2 12h20" stroke="#222" strokeWidth="2" />
          <path d="M12 0l4 5H8zM12 24l4-5H8zM0 12l5-4v8zM24 12l-5-4v8z" />
        </g>
      );
  }
};

const Timeline = () => (
  <div className="flex h-[75px] shrink-0 bg-[#f1f1f1]">
    <svg width="219" height="75" viewBox="0 933 219 75" fill="#666" className="shrink-0">
      <path d="M17 961h2.500v18H17zM34 961v18l-14-9zM53 970l14-9v18zM69 966h3v8h-3zM92 958.500v22l18-11zM127 966h3v8h-3zM132 961v18l14-9zM167 961v18l14-9zM181.500 961h2.500v18h-2.500z" />
    </svg>
    <div className="flex gap-3 pt-6">
      {timeline.map((kind, i) => (
        <svg key={i} width="24" height="40" viewBox="0 0 24 40" className="overflow-visible">
          <TimelineArt kind={kind} />
          <path d={i === 0 ? "M13 28v10h36" : i === timeline.length - 1 ? "M12 28v11.500" : "M12 28v10h37"} fill="none" stroke="#cbcbcb" strokeWidth="3" />
        </svg>
      ))}
    </div>
    <svg width="20" height="50" viewBox="0 0 20 50" className="-ml-[3px] mt-[15px] shrink-0" fill="#666">
      <path d="M0 0h18.500v7L11 13v35H7.500V13L0 7z" />
    </svg>
    <div className="ml-auto pr-[20px] pt-[25px]"><Gear size={23} color="#808080" /></div>
  </div>
);

/* ---------- taskbar ---------- */

const Task = ({ children, active, running }: Children & { active?: boolean; running?: boolean }) => (
  <div className="flex w-[66px] shrink-0 items-center justify-center">
    <div className={`relative flex h-[60px] w-[60px] items-center justify-center rounded-md ${active ? "border border-[#3a3a3a] bg-[#2a2a2a]" : ""}`}>
      <svg width="36" height="36" viewBox="0 0 36 36" className="overflow-visible">{children}</svg>
      {active && <span className="absolute bottom-0 h-[5px] w-6 rounded-full bg-[#4cc2ff]" />}
      {running && <span className="absolute bottom-0 h-[5px] w-[9px] rounded-full bg-[#9a9a9a]" />}
    </div>
  </div>
);

const ChromeArt = () => (
  <g>
    <path d="M18 18L2.400 9A18 18 0 0 1 33.600 9z" fill="#e33b2e" />
    <path d="M18 18L33.600 9A18 18 0 0 1 18 36z" fill="#fcc31e" />
    <path d="M18 18L18 36A18 18 0 0 1 2.400 9z" fill="#279847" />
    <path d="M18 9h15.600q1 3 0 5H22zM25.800 22.500L18 36l3-10z" fill="#fcc31e" />
    <path d="M10.200 22.500L2.400 9l8 5z" fill="#279847" />
    <circle cx="18" cy="18" r="9" fill="#fff" />
    <circle cx="18" cy="18" r="7.200" fill="#2f7de9" />
  </g>
);

const BraveArt = () => (
  <g>
    <path d="M11 0h14l3 3 3-.500 2 5-1 4 1 3-4 14q-2 3-5 4.500L18 36l-6-3q-3-1.500-5-4.500L3 14.500l1-3-1-4 2-5L8 3z" fill="#ff4a12" />
    <path d="M18 6l5-1 6 6-2 3 1 3-5 5 1 3-6 4-6-4 1-3-5-5 1-3-2-3 6-6z" fill="#fff" />
    <path d="M10 11l6 1.500-2 3zM26 11l-6 1.500 2 3zM16.500 13h3l1 6-2.500 3-2.500-3zM10 17l3.500 3-1.500 1zM26 17l-3.500 3 1.500 1z" fill="#ff4a12" />
    <path d="M14 26.500l4-2 4 2-4 3.500z" fill="#fff" stroke="#ff4a12" strokeWidth=".8" />
  </g>
);

const Gift = () => (
  <svg width="68" height="36" viewBox="602 1027 68 36" className="shrink-0">
    <path d="M619 1044h35v16q-18 4-35 0z" fill="#2ea3ee" />
    <path d="M637 1044h17v16l-17 1.500z" fill="#0f7ccb" />
    <path d="M618 1039h36v6h-36z" fill="#47b6f7" />
    <path d="M625 1039h6v22h-6zM645 1039h5v21h-5z" fill="#f2c063" />
    <path d="M636 1037q-9-10-11-5t-1 7q6 0 12-2zM637 1037q9-10 11-5t0 7q-6 0-11-2z" fill="#eab55a" stroke="#b57f2c" />
    <circle cx="606" cy="1041" r="2.500" fill="#e0a63c" />
    <circle cx="613" cy="1036.500" r="2.500" fill="#4fd6e0" />
    <circle cx="612" cy="1045" r="2.500" fill="#ec4fa0" />
    <circle cx="657" cy="1033" r="2.500" fill="#ec4fa0" />
    <circle cx="666.500" cy="1038" r="2.500" fill="#4fd6e0" />
    <circle cx="660" cy="1042" r="2.500" fill="#e0a63c" />
  </svg>
);

const Taskbar = () => (
  <footer className="flex h-[72px] shrink-0 items-center border-t-2 border-[#424242] bg-[#1c1c1c] pb-[2px] font-['Open_Sans',sans-serif] text-white">
    <svg width="294" height="68" viewBox="0 1010 294 68" className="shrink-0">
      <path d="M46 1033Q32 1036 31 1048q4-3 7 0 4-3 8 0 4-3 8 0 4-3 8 0-1-12-16-15z" fill="#5fb0ee" />
      <path d="M46 1033q-7 5-8 15 4-3 8 0 4-3 8 0-1-10-8-15z" fill="#8accf7" />
      <path d="M46 1047v12q0 3-3 3t-3-3" fill="none" stroke="#8a8a8a" strokeWidth="2" />
      <circle cx="58.500" cy="1030" r="11.800" fill="#ff99a4" />
      <text x="58.500" y="1036" textAnchor="middle" fontFamily="Open Sans, sans-serif" fontSize="16" fill="#111">1</text>
    </svg>
    <svg width="35" height="35" viewBox="0 0 35 35" className="mt-[1px] shrink-0">
      <defs>
        <linearGradient id="win" x1="0" y1="0" x2="1" y2="1">
          <stop offset="0" stopColor="#74f0ff" />
          <stop offset="1" stopColor="#0a95ff" />
        </linearGradient>
      </defs>
      <path d="M1 0h16v16.500H0V1zM18.500 0H34l1 1v15.500H18.500zM0 18.500h17V35H1l-1-1zM18.500 18.500H35V34l-1 1H18.500z" fill="url(#win)" />
    </svg>
    <div className="ml-[20px] flex h-12 w-[330px] shrink-0 items-center rounded-full border border-[#4a4a4a] bg-[#3a3a3a] pl-4 pr-[8px]">
      <svg width="24" height="24" viewBox="0 0 24 24" fill="none" stroke="#e0e0e0" strokeWidth="2.200">
        <circle cx="10.500" cy="10" r="8.300" />
        <path d="M16 16.500l6 6" strokeWidth="2.800" />
      </svg>
      <span className="ml-[15px] text-[19.300px] text-[#d0d0d0]">Search</span>
      <div className="ml-auto"><Gift /></div>
    </div>
    <div className="ml-[3px] flex">
      <Task>
        <path d="M0 11h27v24H0z" fill="#666" />
        <path d="M9 1h27v24H9z" fill="#f1f1f1" />
        <path d="M9 11h18v14H9z" fill="#c8c8c8" />
      </Task>
      <Task>
        <path d="M0 3q0-1 1-1h10l4 4v5H0z" fill="#e09b00" />
        <path d="M0 7h14l3-2h18q1 0 1 1v29H0z" fill="#ffcb47" />
        <path d="M6 35V27q0-3 3-3h18q3 0 3 3v8z" fill="#0f72c4" />
        <path d="M11 29h14" stroke="#0a4f8f" strokeWidth="1.500" />
      </Task>
      <Task>
        <defs>
          <linearGradient id="cpA" x1="0" y1="0" x2="0" y2="1">
            <stop offset="0" stopColor="#1f8ef5" />
            <stop offset=".6" stopColor="#43b66a" />
            <stop offset="1" stopColor="#f2c811" />
          </linearGradient>
          <linearGradient id="cpB" x1="0" y1="0" x2="0" y2="1">
            <stop offset="0" stopColor="#a45ee5" />
            <stop offset=".6" stopColor="#ef5f8c" />
            <stop offset="1" stopColor="#ffa04a" />
          </linearGradient>
        </defs>
        <path d="M10 3h14q3 0 4 3l1 5h-6q-3 0-4 3l-4 10q-1 2-4 2H5q-5 0-4-5l4-13q1-5 5-5z" fill="url(#cpA)" />
        <path d="M18 3h6q3 0 4 3l1 5h-8z" fill="#1b3fc9" />
        <path d="M26 33H14q-3 0-4-3l-1-4h5q2 0 3-3l4-9q1-3 4-3h6q5 0 4 5l-4 12q-1 5-5 5z" fill="url(#cpB)" />
        <path d="M18 33h-4q-3 0-4-3l-1-4h6z" fill="#f0613c" />
        <path d="M19.500 12.500h3L17 24h-3z" fill="#1c1c1c" />
      </Task>
      <Task>
        <defs>
          <linearGradient id="edA" x1="0" y1="0" x2="1" y2=".6">
            <stop offset="0" stopColor="#35b6f2" />
            <stop offset=".5" stopColor="#2cc3d2" />
            <stop offset="1" stopColor="#66e03c" />
          </linearGradient>
        </defs>
        <circle cx="18" cy="18" r="18" fill="#0c70cd" />
        <path d="M0 17A18 18 0 0 1 36 18q0 7-9 7-5-1-5-3 2-2 0-6-3-5-10-5Q4 11 0 17z" fill="url(#edA)" />
        <path d="M11 19q1 13 15 11 4-1 7-4-4 10-15 10-11-2-11-12 0-6 4-9 6 0 3 4z" fill="#124f9e" />
        <path d="M22 16q2 3 0 6 0 3 5 3 5 0 8-3-1 4-4 6-8 4-14-2-6-6 0-11 3-1 5 1z" fill="#1c1c1c" />
      </Task>
      <Task><BraveArt /></Task>
      <Task>
        <rect x="3" y="3" width="30" height="30" rx="6" fill="#fff" />
        <rect x="7.500" y="7.500" width="9" height="9" rx="1" fill="#0a66dc" />
        <rect x="19.500" y="7.500" width="9" height="21" rx="1" fill="#2684ff" />
      </Task>
      <Task><ChromeArt /></Task>
      <Task>
        <path d="M0 24l4 3L27 10V0L1 22z" fill="#0065a9" />
        <path d="M0 12l4-3 23 17v10L1 14z" fill="#0f8cd8" />
        <path d="M26 0l10 4v28l-10 4z" fill="#27a7f2" />
      </Task>
      <Task>
        <circle cx="19" cy="7.500" r="5.500" fill="#7b83eb" />
        <circle cx="30" cy="9" r="3.800" fill="#5059c9" />
        <path d="M26 14h8q2 0 2 2v7q0 6-6 6-4 0-6-3z" fill="#5059c9" />
        <path d="M11 14h17v10q-1 10-9 10t-9-9z" fill="#7b83eb" />
        <rect x="0" y="9" width="18" height="18" rx="1.500" fill="#4b53bc" />
        <text x="9" y="23" textAnchor="middle" fontFamily="Open Sans, sans-serif" fontWeight="700" fontSize="14" fill="#fff">T</text>
      </Task>
      <Task running>
        <ChromeArt />
        <circle cx="30" cy="6" r="12.500" fill="#5d9732" />
        <text x="32" y="10" textAnchor="middle" fontFamily="Roboto, sans-serif" fontSize="13" fontWeight="500" fill="#d6e8c5">A</text>
      </Task>
      <Task active>
        <path d="M4 28h26V6h4v30H4z" fill="#8f3a00" />
        <path d="M1 4l6-3v24l-6 3z" fill="#ffa064" />
        <path d="M6 0h24q1 0 1 1v24H6z" fill="#ff6b00" />
        <text x="19" y="19" textAnchor="middle" fontFamily="Open Sans, sans-serif" fontWeight="800" fontSize="18" fill="#fff">F</text>
        <text x="19" y="33" textAnchor="middle" fontFamily="Open Sans, sans-serif" fontWeight="800" fontSize="7" fill="#fff">FUS</text>
      </Task>
      <Task running>
        <g transform="translate(-1 0)"><BraveArt /></g>
        <circle cx="30" cy="5" r="12" fill="#8a3fb0" />
        <path d="M30 17a12 12 0 0 0 9-20L26 11z" fill="#5545b4" />
        <path d="M19 0q4-7 11-7l8 4-14 8z" fill="#d83f8c" />
        <path d="M23-2l14 14M38-3L23 13" stroke="#fff" strokeWidth="4" />
      </Task>
    </div>
    <svg width="38" height="20" viewBox="0 0 38 20" className="ml-auto mr-[14px] shrink-0" fill="none" stroke="#fff" strokeWidth="2">
      <path d="M11 13l8-7 8 7" />
    </svg>
    <div className="w-[48px] shrink-0 text-center text-[17px] leading-[22.500px] tracking-[-0.3px]">
      <div>ENG</div>
      <div>IN</div>
    </div>
    <svg width="98" height="24" viewBox="1686 1032 98 24" className="ml-[20px] shrink-0" fill="none" stroke="#fff" strokeWidth="1.800">
      <path d="M1687.500 1042q11.500-11 23 0M1691 1046q8-7.500 16 0M1694.500 1049.500q4.500-4 9 0" />
      <circle cx="1699" cy="1050.500" r="1.800" fill="#fff" stroke="none" />
      <path d="M1724 1040.500h4l5-4.500v16l-5-4.500h-4z" />
      <path d="M1736 1040q3 4 0 8M1739 1037q5 7 0 14" />
      <path d="M1742 1035q7 9 0 18" stroke="#666" />
      <path d="M1770 1037.500h7q2 0 2 2v9q0 2-2 2h-15q-2 0-2-2v-5" />
      <path d="M1763 1040h8v9h-9z" fill="#fff" stroke="none" />
      <path d="M1780 1041.500h1q2 0 2 2.500t-2 2.500h-1z" fill="#fff" stroke="none" />
      <path d="M1763.500 1032l-4.500 8h3.500l-1 6 6-8h-3.500l2-5z" fill="#fff" stroke="#1c1c1c" strokeWidth=".7" />
    </svg>
    <div className="ml-2 mr-[30px] w-[98px] shrink-0 pb-px text-right text-[17.700px] leading-[24px] tracking-[-0.200px]">
      <div>9:02 AM</div>
      <div>6/15/2025</div>
    </div>
  </footer>
);

export default function App() {
  return (
    <div className="flex h-[1080px] w-[1920px] flex-col overflow-hidden">
      <TitleBar />
      <QuickBar />
      <Ribbon />
      <main className="relative h-[723px] shrink-0 overflow-hidden">
        <Scene />
        <Browser />
        <div className="absolute left-[6px] top-[680px]"><PanelHeader label="COMMENTS" /></div>
        <NavBar />
        <svg width="24" height="24" viewBox="0 0 24 24" className="absolute left-[1878px] top-[687px]">
          <path d="M12 0a11.800 11.800 0 1 0 0 24h11.500V12A11.800 11.800 0 0 0 12 0z" fill="#000" />
          <path d="M4.500 14l11-7M5.500 16.500L18 8M11 16l7-5M14 16.500l4-2.500" stroke="#fff" strokeWidth="1.400" />
        </svg>
      </main>
      <Timeline />
      <Taskbar />
    </div>
  );
}
